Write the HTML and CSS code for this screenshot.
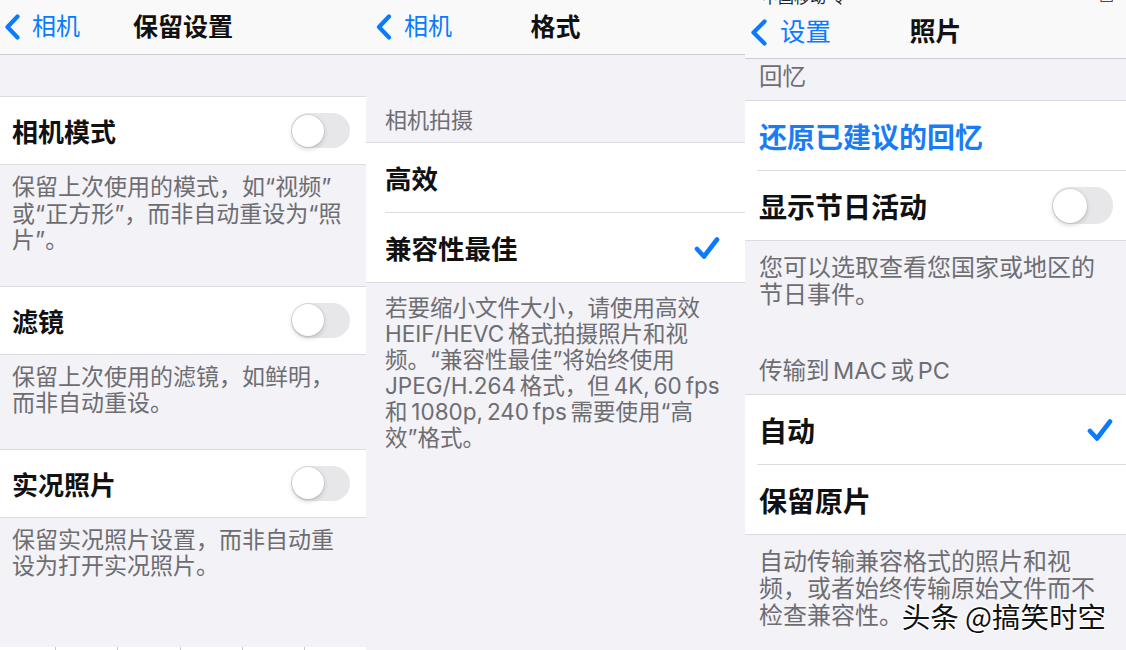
FILE: index.html
```html
<!DOCTYPE html>
<html lang="zh-CN">
<head>
<meta charset="utf-8">
<title>设置</title>
<link rel="stylesheet" href="styles.css">
</head>
<body>
<div class="screens">

  <section class="screen s1">
    <header class="nav">
      <a class="back"><svg class="chev" viewBox="0 0 15 26"><path d="M12.5 2.5 L2.5 13 L12.5 23.5"/></svg><span>相机</span></a>
      <h1 class="title">保留设置</h1>
      <span></span>
    </header>
    <div class="lead"></div>
    <div class="group">
      <div class="row"><span class="label">相机模式</span><span class="toggle"><span class="knob"></span></span></div>
    </div>
    <p class="foot">保留上次使用的模式，如“视频”<br>或“正方形”，而非自动重设为“照<br>片”。</p>
    <div class="group">
      <div class="row"><span class="label">滤镜</span><span class="toggle"><span class="knob"></span></span></div>
    </div>
    <p class="foot">保留上次使用的滤镜，如鲜明，<br>而非自动重设。</p>
    <div class="group">
      <div class="row"><span class="label">实况照片</span><span class="toggle"><span class="knob"></span></span></div>
    </div>
    <p class="foot">保留实况照片设置，而非自动重<br>设为打开实况照片。</p>
    <div class="fill"></div>
    <div class="dock"><span></span><span></span><span></span><span></span><span></span><span></span></div>
  </section>

  <section class="screen s2">
    <header class="nav">
      <a class="back"><svg class="chev" viewBox="0 0 16 26"><path d="M13 2.5 L3 13 L13 23.5"/></svg><span>相机</span></a>
      <h1 class="title">格式</h1>
      <span></span>
    </header>
    <h2 class="head">相机拍摄</h2>
    <div class="group">
      <div class="row"><span class="label">高效</span></div>
      <div class="row"><span class="label">兼容性最佳</span><svg class="check" viewBox="0 0 26 24"><path d="M3 13 L10 20.5 L23 3.5"/></svg></div>
    </div>
    <p class="foot">若要缩小文件大小，请使用高效<br>HEIF/HEVC 格式拍摄照片和视<br>频。“兼容性最佳”将始终使用<br>JPEG/H.264 格式，但 4K, 60 fps<br>和 1080p, 240 fps 需要使用“高<br>效”格式。</p>
  </section>

  <section class="screen s3">
    <div class="status"><span>中国移动 令</span><span class="batt">▭</span></div>
    <header class="nav">
      <a class="back"><svg class="chev" viewBox="0 0 18 27"><path d="M14.5 2.5 L3.5 13.5 L14.5 24.5"/></svg><span>设置</span></a>
      <h1 class="title">照片</h1>
      <span></span>
    </header>
    <h2 class="head first">回忆</h2>
    <div class="group">
      <div class="row"><span class="label link">还原已建议的回忆</span></div>
      <div class="row"><span class="label">显示节日活动</span><span class="toggle"><span class="knob"></span></span></div>
    </div>
    <p class="foot">您可以选取查看您国家或地区的<br>节日事件。</p>
    <h2 class="head">传输到 MAC 或 PC</h2>
    <div class="group">
      <div class="row"><span class="label">自动</span><svg class="check" viewBox="0 0 26 24"><path d="M3 13 L10 20.5 L23 3.5"/></svg></div>
      <div class="row"><span class="label">保留原片</span></div>
    </div>
    <p class="foot">自动传输兼容格式的照片和视<br>频，或者始终传输原始文件而不<br>检查兼容性。</p>
    <div class="mark">头条 @搞笑时空</div>
  </section>

</div>
</body>
</html>
```

FILE: styles.css
```css
html, body {
  margin: 0;
  padding: 0;
}
body {
  width: 1126px;
  height: 650px;
  overflow: hidden;
  background: #f2f2f7;
  font-family: "Inter", "Noto Sans CJK SC", sans-serif;
  color: #000;
}
.screens {
  display: flex;
  height: 650px;
}
.screen {
  display: flex;
  flex-direction: column;
  background: #f2f2f7;
  overflow: hidden;
  height: 650px;
}
.s1 { width: 366px; }
.s2 { width: 379px; }
.s3 { width: 381px; position: relative; }

/* nav bar */
.nav {
  display: grid;
  grid-template-columns: 1fr auto 1fr;
  align-items: center;
  background: #f9f9f9;
  border-bottom: 1px solid #cdcdd0;
  flex: none;
}
.s1 .nav, .s2 .nav { height: 54px; }
.s3 .nav { height: 52px; padding-top: 1px; }
.back {
  display: flex;
  align-items: center;
  gap: 12px;
  color: #0a7aff;
  font-size: 24px;
  line-height: 30px;
}
.chev {
  fill: none;
  stroke: #0a7aff;
  stroke-width: 4.2;
  stroke-linecap: round;
  stroke-linejoin: round;
}
.s1 .back { padding-left: 5px; }
.s1 .chev { width: 15px; height: 26px; }
.s2 .back { padding-left: 10px; }
.s2 .chev { width: 16px; height: 26px; }
.s3 .back { padding-left: 5px; font-size: 25.5px; }
.s3 .chev { width: 18px; height: 27px; }
.title {
  margin: 0;
  font-size: 25px;
  font-weight: 700;
  line-height: 30px;
  color: #111;
}
.s3 .title { font-size: 26px; }

.status {
  height: 5px;
  overflow: hidden;
  background: #f9f9f9;
  display: flex;
  justify-content: space-between;
  padding: 0 12px 0 17px;
  font-size: 16px;
  line-height: 16px;
  color: #222;
  flex: none;
}
.status span { margin-top: -11px; }

/* groups & rows */
.lead { height: 41px; flex: none; }
.group {
  background: #fff;
  border-top: 1px solid #dcdce0;
  border-bottom: 1px solid #dcdce0;
  flex: none;
}
.row {
  display: flex;
  align-items: center;
  justify-content: space-between;
}
.label { font-weight: 700; color: #111; }
.link { color: #1a7cf5; }

.s1 .row { height: 67px; padding: 0 16px 0 12px; }
.s1 .label { font-size: 26px; }

.s2 .group { padding-left: 19px; }
.s2 .row { height: 69px; padding-right: 25px; }
.s2 .row + .row { border-top: 1px solid #dcdce0; }
.s2 .label { font-size: 26.5px; }

.s3 .group { padding-left: 12px; }
.s3 .row { height: 69px; padding: 0 13px 0 2px; }
.s3 .row + .row { border-top: 1px solid #dcdce0; }
.s3 .label { font-size: 28px; }

/* toggle */
.toggle {
  display: flex;
  align-items: center;
  width: 59px;
  height: 35px;
  border-radius: 18px;
  background: #e7e7ea;
  padding: 0 1px;
  box-sizing: border-box;
}
.knob {
  width: 32px;
  height: 32px;
  border-radius: 50%;
  background: #fff;
  box-shadow: 0 0 0 0.5px rgba(0,0,0,0.1), 0 2px 5px rgba(0,0,0,0.18);
}
.s3 .toggle { width: 61px; height: 37px; }
.s3 .knob { width: 34px; height: 34px; }

.check {
  width: 26px;
  height: 24px;
  fill: none;
  stroke: #0a7aff;
  stroke-width: 4.6;
  stroke-linecap: round;
  stroke-linejoin: round;
}

/* headers & footers */
.head {
  margin: 0;
  font-weight: 400;
  color: #6d6d72;
  flex: none;
  white-space: nowrap;
}
.s2 .head {
  font-size: 22px;
  line-height: 26px;
  padding: 52px 19px 9px;
}
.s3 .head {
  font-size: 23.5px;
  line-height: 26px;
  padding: 30px 14px 10px;
  word-spacing: -3px;
}
.s3 .head.first { padding-top: 5px; }

.foot {
  margin: 0;
  color: #6d6d72;
  flex: none;
  white-space: nowrap;
}
.s1 .foot {
  font-size: 23px;
  line-height: 26.5px;
  padding: 9px 12px 32px;
}
.s2 .foot {
  font-size: 22.5px;
  line-height: 26px;
  padding: 12px 19px 0;
  word-spacing: -2.5px;
}
.s3 .foot {
  font-size: 24px;
  line-height: 27px;
  padding: 13px 14px 20px;
}

/* bottom dock strip */
.fill { flex: 1; }
.dock {
  display: flex;
  height: 3px;
  background: #fff;
  flex: none;
}
.dock span {
  width: 72px;
  border-left: 1px solid #c8c8cc;
}
.dock span:first-child { width: 65px; border-left: none; }

/* watermark */
.mark {
  position: absolute;
  right: 20px;
  top: 598px;
  font-family: "Noto Sans CJK SC", sans-serif;
  font-size: 28.5px;
  line-height: 36px;
  font-weight: 400;
  color: #111;
  text-shadow: 1px 0 #fff, -1px 0 #fff, 0 1px #fff, 0 -1px #fff, 1px 1px #fff, -1px -1px #fff, 1px -1px #fff, -1px 1px #fff;
}
```
